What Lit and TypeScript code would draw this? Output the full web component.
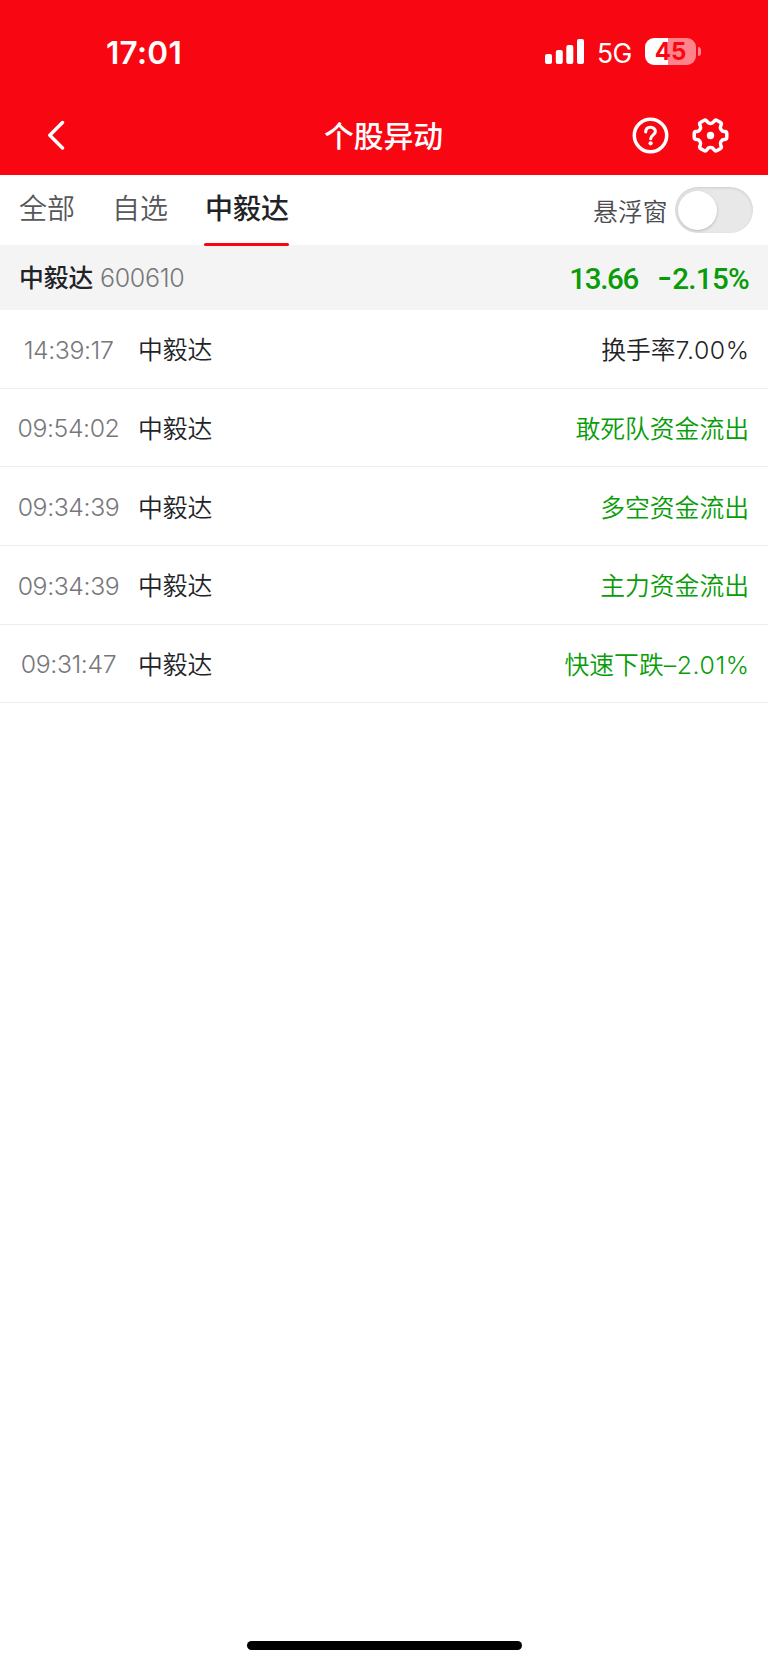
import { LitElement, html, css, svg } from "lit";
import { customElement, property, state } from "lit/decorators.js";

interface Alert {
  time: string;
  name: string;
  event: string;
  value?: string;
  down: boolean;
}

const ALERTS: Alert[] = [
  { time: "14:39:17", name: "中毅达", event: "换手率", value: "7.00%", down: false },
  { time: "09:54:02", name: "中毅达", event: "敢死队资金流出", down: true },
  { time: "09:34:39", name: "中毅达", event: "多空资金流出", down: true },
  { time: "09:34:39", name: "中毅达", event: "主力资金流出", down: true },
  { time: "09:31:47", name: "中毅达", event: "快速下跌", value: "–2.01%", down: true },
];

/* Closed outline of a six-tooth cog centred on the origin, softened at each vertex. */
function cogPath(outer: number, inner: number): string {
  const pts: [number, number][] = [];
  for (let i = 0; i < 6; i++) {
    const a = i * 60;
    for (const [r, d] of [[inner, -20], [outer, -13], [outer, 13], [inner, 20]]) {
      const t = ((a + d) * Math.PI) / 180;
      pts.push([r * Math.cos(t), r * Math.sin(t)]);
    }
  }
  const n = pts.length;
  let d = "";
  for (let i = 0; i < n; i++) {
    const p = pts[(i + n - 1) % n], c = pts[i], q = pts[(i + 1) % n];
    const toward = (o: [number, number]) => {
      const len = Math.hypot(o[0] - c[0], o[1] - c[1]);
      const k = Math.min(0.5, 1.9 / len);
      return `${(c[0] + (o[0] - c[0]) * k).toFixed(2)} ${(c[1] + (o[1] - c[1]) * k).toFixed(2)}`;
    };
    d += `${i ? "L" : "M"}${toward(p)}Q${c[0].toFixed(2)} ${c[1].toFixed(2)} ${toward(q)}`;
  }
  return d + "Z";
}

@customElement("status-bar")
class StatusBar extends LitElement {
  static styles = css`
    :host { display: flex; height: 96px; padding: 0 67px 0 106px; justify-content: space-between; color: #fff; }
    .time { font-size: 31.5px; font-weight: 600; line-height: 38px; margin-top: 34px; letter-spacing: 0.3px; }
    .right { display: flex; align-items: flex-start; }
    .bars { margin-top: 39px; width: 39px; height: 25px; }
    .net { font-size: 26.5px; line-height: 32px; margin: 37px 0 0 13px; width: 35px; letter-spacing: -0.6px; }
    .battery { display: flex; align-items: center; margin: 38px 0 0 13px; }
    .cell {
      width: 51px; height: 27px; border-radius: 9px; text-align: center;
      background: linear-gradient(90deg, #fff 45%, #ff838b 45%);
      color: #f80612; font-size: 24px; font-weight: 700; line-height: 28px;
    }
    .tip { width: 3px; height: 9px; margin-left: 2px; border-radius: 0 4px 4px 0; background: #ff838b; }
  `;
  render() {
    return html`
      <span class="time">17:01</span>
      <div class="right">
        <svg class="bars" viewBox="0 0 39 25" fill="#fff">
          <rect x="0" y="15" width="7" height="10" rx="2" />
          <rect x="10.8" y="11" width="7" height="14" rx="2" />
          <rect x="21.3" y="6" width="7" height="19" rx="2" />
          <rect x="32" y="0" width="7" height="25" rx="2" />
        </svg>
        <span class="net">5G</span>
        <div class="battery"><div class="cell">45</div><div class="tip"></div></div>
      </div>
    `;
  }
}

@customElement("nav-bar")
class NavBar extends LitElement {
  static styles = css`
    :host { display: grid; grid-template-columns: 1fr auto 1fr; align-items: center; height: 78.5px; padding: 0 39px 0 39px; color: #fff; }
    .back { width: 19px; height: 30px; margin-left: 8px; }
    .title { font-size: 29.8px; font-weight: 500; line-height: 44px; padding-top: 1px; margin-left: -1px; }
    .actions { display: flex; justify-content: flex-end; gap: 23.5px; }
    .icon { width: 37px; height: 37px; display: block; }
  `;
  render() {
    return html`
      <svg class="back" viewBox="0 0 19 30" fill="none" stroke="#fff" stroke-width="3.4" stroke-linecap="round" stroke-linejoin="round">
        <path d="M15.5 2.5 2.8 15.2 15.5 28" />
      </svg>
      <span class="title">个股异动</span>
      <div class="actions">
        <svg class="icon" viewBox="-18.5 -18.5 37 37" fill="none" stroke="#fff" stroke-linecap="round">
          <circle r="16.2" stroke-width="3.5" />
          <path d="M-4.8-3.6C-4.7-6.6-2.7-8.2 0-8.2s4.9 1.7 4.9 4.3C4.9-.7.2-.4.2 3.3" stroke-width="3.1" />
          <circle cx=".1" cy="7.8" r="2.1" fill="#fff" stroke="none" />
        </svg>
        <svg class="icon" viewBox="-18.5 -18.5 37 37" fill="none" stroke="#fff" stroke-linejoin="round">
          ${svg`<path d=${cogPath(16.7, 12.3)} stroke-width="3.5" />`}
          <circle r="3.7" fill="#fff" stroke="none" />
        </svg>
      </div>
    `;
  }
}

@customElement("tab-strip")
class TabStrip extends LitElement {
  static styles = css`
    :host { display: flex; justify-content: space-between; height: 70.5px; padding: 0 15px 0 19px; background: #fff; }
    .tabs { display: flex; }
    .tab { position: relative; padding-top: 13px; margin-right: 37px; font-size: 28px; line-height: 42px; color: #57575a; font-weight: 350; }
    .tab.active { font-weight: 500; color: #222326; }
    .tab.active::after {
      content: ""; position: absolute; left: -1px; right: 0; bottom: -1px; height: 3px;
      border-radius: 2px; background: #f80612;
    }
    .float { display: flex; align-items: flex-start; }
    .label { font-size: 24.8px; line-height: 36px; margin: 19px 7.5px 0 0; color: #4c4c4f; font-weight: 350; }
    .switch {
      box-sizing: border-box; width: 78px; height: 46px; margin-top: 12.5px; padding: 3.5px 3px; border: 0;
      border-radius: 24px; background: #e8e8e8; box-shadow: inset 0 1px 3px rgba(0, 0, 0, 0.12); display: flex;
    }
    .knob { width: 39px; height: 39px; border-radius: 50%; background: #fff; box-shadow: 0 1px 3px rgba(0, 0, 0, 0.22); }
  `;
  @state() active = 2;
  render() {
    return html`
      <div class="tabs">
        ${["全部", "自选", "中毅达"].map(
          (t, i) => html`<span class="tab ${i === this.active ? "active" : ""}" @click=${() => (this.active = i)}>${t}</span>`
        )}
      </div>
      <div class="float">
        <span class="label">悬浮窗</span>
        <div class="switch"><div class="knob"></div></div>
      </div>
    `;
  }
}

@customElement("stock-summary")
class StockSummary extends LitElement {
  static styles = css`
    :host { display: flex; align-items: center; height: 65px; padding: 0 19px; background: #f4f4f4; white-space: nowrap; }
    .name { font-size: 24.8px; font-weight: 500; color: #222326; line-height: 36px; padding-top: 1px; }
    .code { font-size: 25px; font-weight: 300; color: #77777b; margin-left: 6.5px; letter-spacing: -0.3px; flex: 1; padding-top: 1px; }
    .price { font-family: Roboto, sans-serif; font-size: 29.5px; font-weight: 500; color: #089c08; line-height: 36px; padding-top: 3px; letter-spacing: -1.3px; }
    .change { margin-left: 19px; letter-spacing: -0.7px; }
    .minus { font-family: Inter, sans-serif; font-size: 33px; letter-spacing: 0; line-height: 30px; }
  `;
  render() {
    return html`
      <span class="name">中毅达</span>
      <span class="code">600610</span>
      <span class="price">13.66</span>
      <span class="price change"><span class="minus">-</span>2.15%</span>
    `;
  }
}

@customElement("alert-row")
class AlertRow extends LitElement {
  static styles = css`
    :host {
      box-sizing: border-box; display: flex; align-items: center; height: 78.65px; padding: 3px 19px 0 13px;
      border-bottom: 1px solid #ededef; font-size: 24.8px; line-height: 36px; color: #222326; white-space: nowrap;
    }
    .time { width: 111px; text-align: center; font-weight: 300; color: #77777b; letter-spacing: -0.4px; padding-bottom: 1px; }
    .name { margin-left: 14px; flex: 1; font-weight: 350; }
    .event { font-weight: 350; }
    .value { letter-spacing: 0.6px; margin-right: -0.6px; }
    .down { color: #089c08; }
  `;
  @property({ attribute: false }) alert!: Alert;
  render() {
    const a = this.alert;
    return html`
      <span class="time">${a.time}</span>
      <span class="name">${a.name}</span>
      <span class="event ${a.down ? "down" : ""}">${a.event}${a.value ? html`<span class="value">${a.value}</span>` : ""}</span>
    `;
  }
}

@customElement("app-root")
class AppRoot extends LitElement {
  static styles = css`
    :host {
      display: flex; flex-direction: column; width: 768px; height: 1665px; background: #fff; overflow: hidden;
      font-family: Inter, "Noto Sans CJK SC", sans-serif;
    }
    .header { background: #f80612; height: 174.5px; flex: none; }
    .list { flex: 1; }
    .home { width: 275px; height: 9px; border-radius: 5px; background: #000; margin: 0 auto 15px; flex: none; }
  `;
  render() {
    return html`
      <div class="header">
        <status-bar></status-bar>
        <nav-bar></nav-bar>
      </div>
      <tab-strip></tab-strip>
      <stock-summary></stock-summary>
      <div class="list">${ALERTS.map((a) => html`<alert-row .alert=${a}></alert-row>`)}</div>
      <div class="home"></div>
    `;
  }
}
